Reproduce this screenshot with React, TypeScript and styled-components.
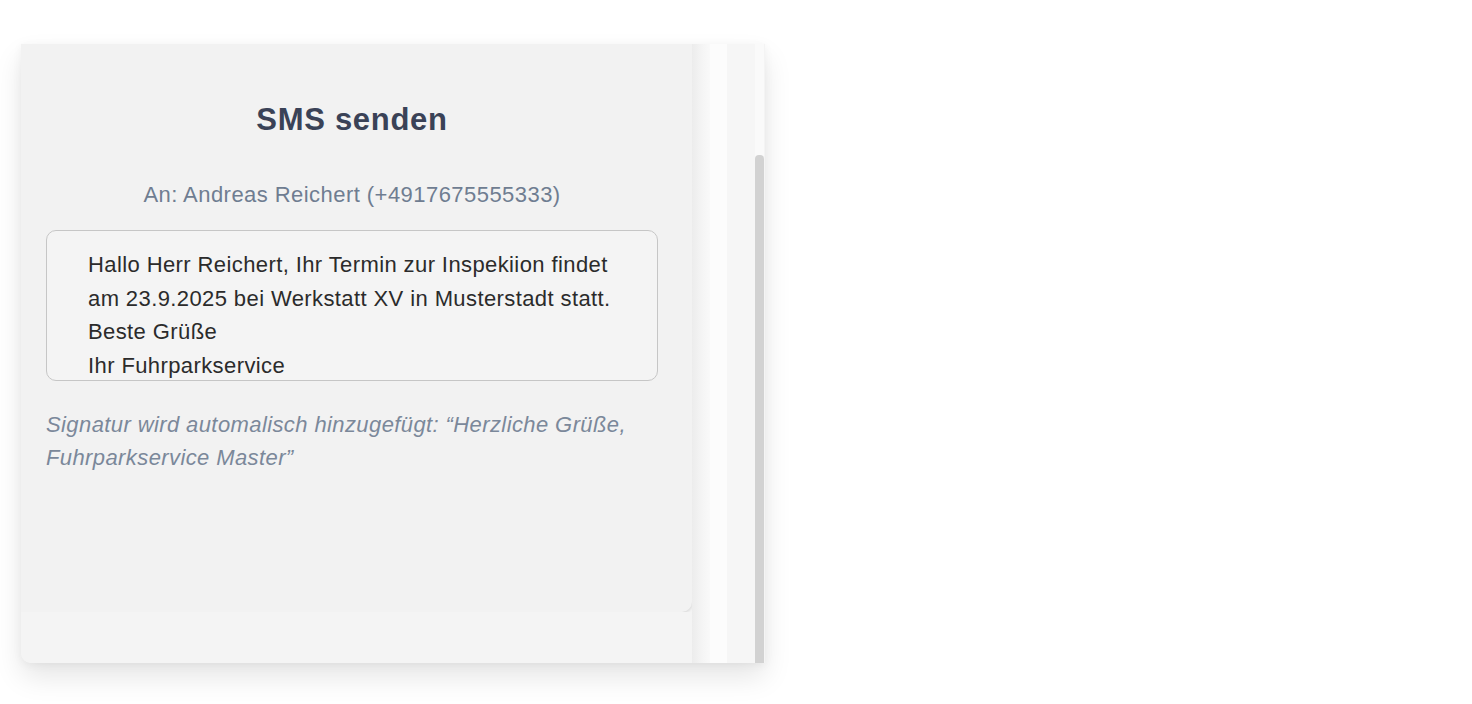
import styled, { createGlobalStyle } from 'styled-components';

const GlobalStyle = createGlobalStyle`
  html, body {
    margin: 0;
    padding: 0;
    background: #ffffff;
  }
  body {
    font-family: "Liberation Sans", Arial, sans-serif;
  }
`;

const message = [
  'Hallo Herr Reichert, Ihr Termin zur Inspekiion findet',
  'am 23.9.2025 bei Werkstatt XV in Musterstadt statt.',
  'Beste Grüße',
  'Ihr Fuhrparkservice',
];

export default function App() {
  return (
    <>
      <GlobalStyle />
      <Page>
        <Window>
          <Main>
            <Card>
              <Title>SMS senden</Title>
              <Recipient>An: Andreas Reichert (+4917675555333)</Recipient>
              <MessageBox>
                {message.map((line) => (
                  <MessageLine key={line}>{line}</MessageLine>
                ))}
              </MessageBox>
              <Signature>
                Signatur wird automalisch hinzugefügt: “Herzliche Grüße,
                <br />
                Fuhrparkservice Master”
              </Signature>
            </Card>
            <Footer />
          </Main>
          <Gutter />
          <Divider />
          <Rail />
          <ScrollTrack>
            <ScrollThumb />
          </ScrollTrack>
        </Window>
      </Page>
    </>
  );
}

const Page = styled.div`
  display: flex;
  padding: 44px 0 0 21px;
  height: 704px;
  box-sizing: border-box;
`;

const Window = styled.div`
  display: flex;
  width: 744px;
  height: 619px;
  background: #f4f4f4;
  border-radius: 0 0 0 10px;
  overflow: hidden;
  box-shadow: 0 14px 28px rgba(0, 0, 0, 0.1), 0 2px 10px rgba(0, 0, 0, 0.05);
`;

const Main = styled.div`
  display: flex;
  flex-direction: column;
  width: 671px;
  flex-shrink: 0;
`;

const Card = styled.section`
  display: flex;
  flex-direction: column;
  height: 568px;
  box-sizing: border-box;
  padding: 58px 34px 0 25px;
  background: #f2f2f2;
  border-bottom-right-radius: 10px;
  box-shadow: 0 1px 3px rgba(0, 0, 0, 0.1), 1px 0 4px rgba(0, 0, 0, 0.05);
`;

const Title = styled.h2`
  margin: 0;
  text-align: center;
  font-size: 31px;
  line-height: 36px;
  font-weight: 700;
  letter-spacing: 0.7px;
  color: #3a4257;
`;

const Recipient = styled.div`
  margin-top: 42px;
  text-align: center;
  font-size: 22px;
  line-height: 30px;
  letter-spacing: 0.45px;
  color: #6f7d91;
`;

const MessageBox = styled.div`
  margin-top: 20px;
  height: 151px;
  box-sizing: border-box;
  padding: 17px 20px 0 41px;
  border: 1.5px solid #c6c6c6;
  border-radius: 10px;
  background: #f4f4f4;
  overflow: hidden;
`;

const MessageLine = styled.div`
  font-size: 22px;
  line-height: 33.6px;
  letter-spacing: 0.4px;
  white-space: nowrap;
  color: #2b2b2b;
`;

const Signature = styled.p`
  margin: 27px 0 0;
  font-size: 22px;
  line-height: 33px;
  font-style: italic;
  letter-spacing: 0.4px;
  color: #7b889a;
`;

const Footer = styled.div`
  flex: 1;
  background: #f4f4f4;
`;

const Gutter = styled.div`
  width: 18px;
  flex-shrink: 0;
  background: linear-gradient(90deg, #ececec, #f5f5f5 60%, #f9f9f9);
`;

const Divider = styled.div`
  width: 17px;
  flex-shrink: 0;
  background: #fcfcfc;
`;

const Rail = styled.div`
  width: 28px;
  flex-shrink: 0;
  background: #f6f6f6;
`;

const ScrollTrack = styled.div`
  display: flex;
  flex-direction: column;
  width: 9px;
  flex-shrink: 0;
  padding-top: 111px;
  box-sizing: border-box;
  background: #fafafa;
`;

const ScrollThumb = styled.div`
  flex: 1;
  background: #d2d2d2;
  border-radius: 4px 4px 0 0;
`;
